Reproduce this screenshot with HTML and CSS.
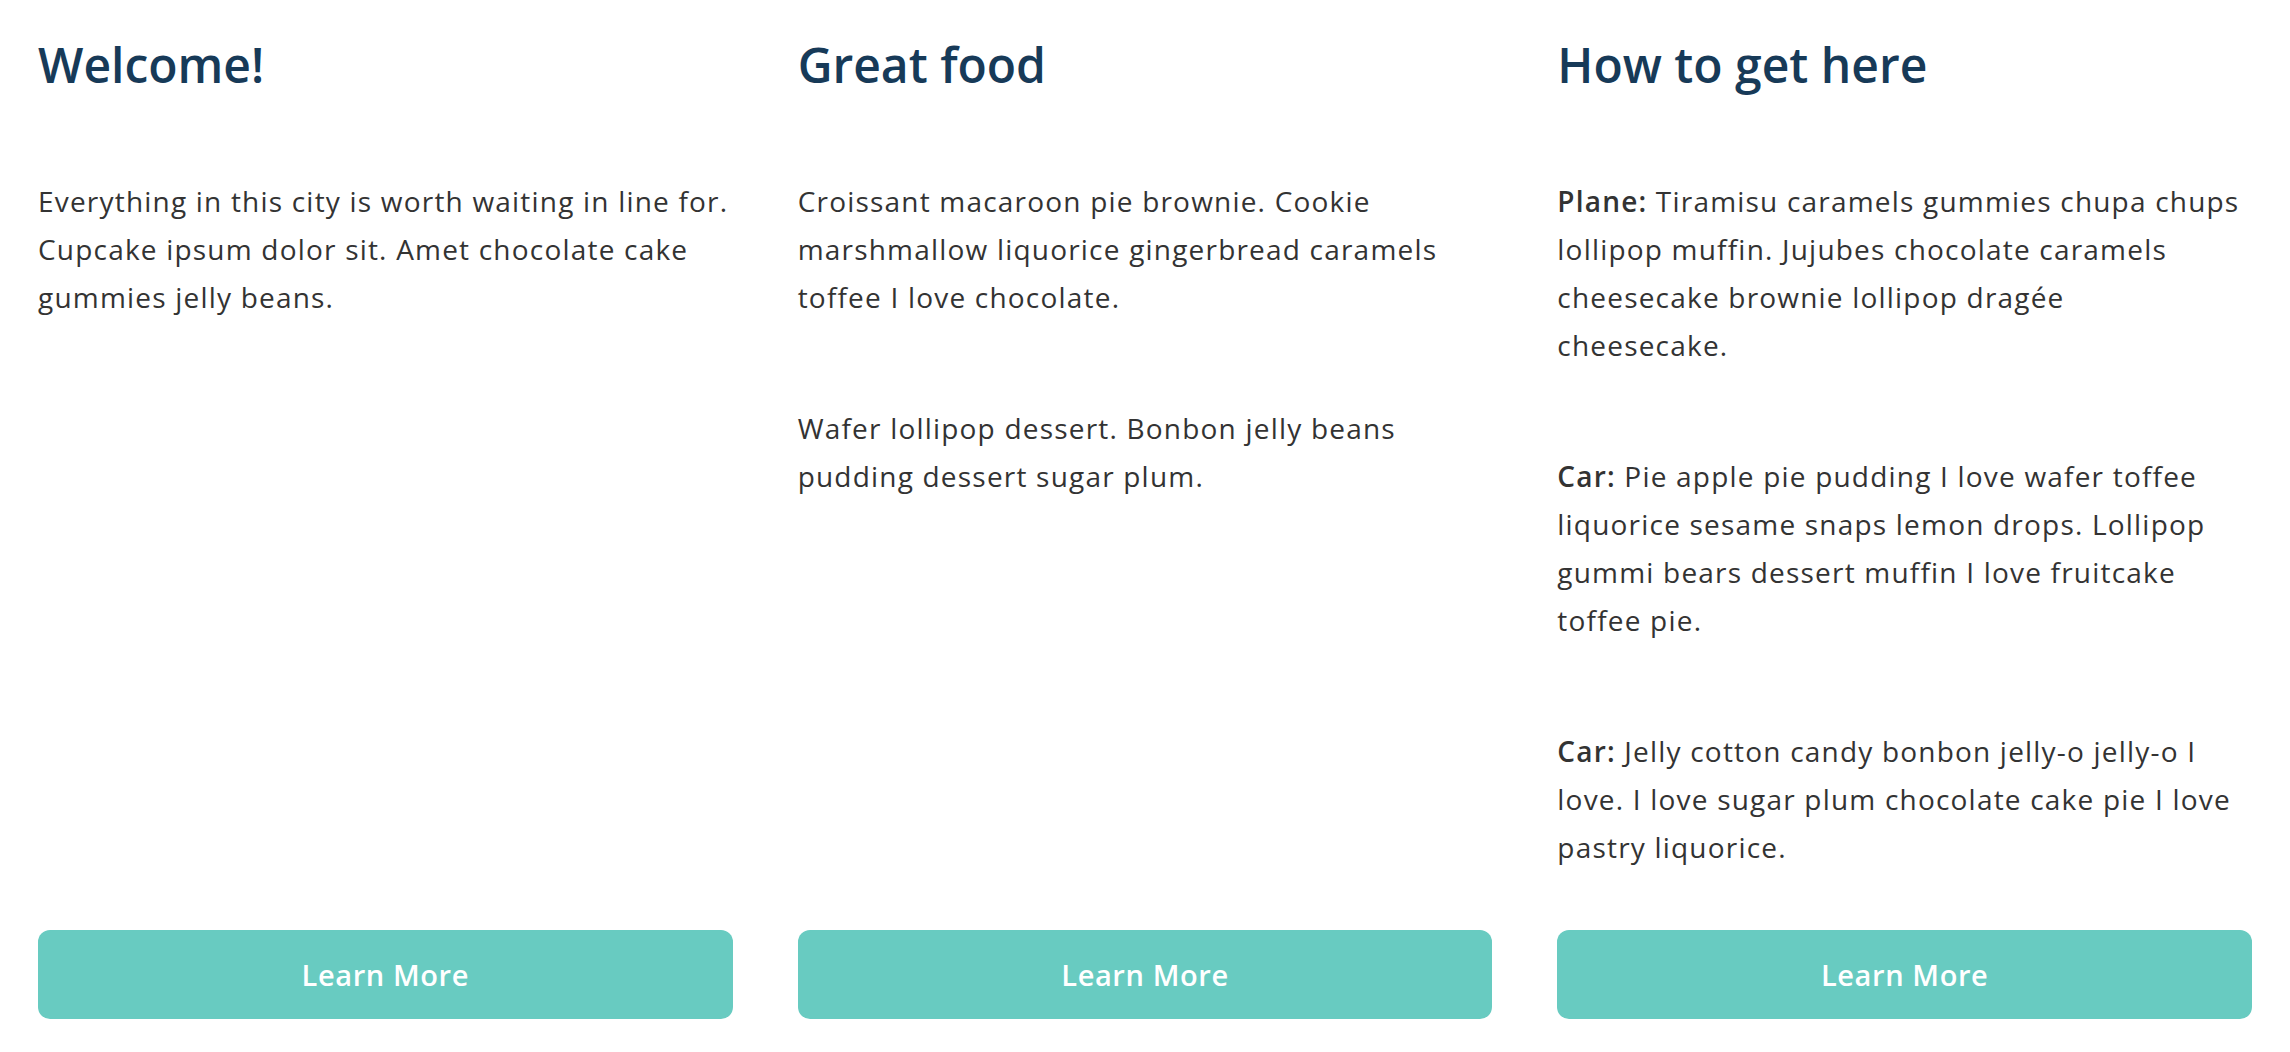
FILE: index.html
```html
<!DOCTYPE html>
<html lang="en">
<head>
<meta charset="utf-8">
<title>Features</title>
<link rel="stylesheet" href="styles.css">
</head>
<body>
<main class="columns">
  <section class="col">
    <h2 class="col-title">Welcome!</h2>
    <div class="col-text">
      <p>Everything in this city is worth waiting in line for. Cupcake ipsum dolor sit. Amet chocolate cake gummies jelly beans.</p>
    </div>
    <a class="btn" href="#">Learn More</a>
  </section>
  <section class="col">
    <h2 class="col-title">Great food</h2>
    <div class="col-text">
      <p>Croissant macaroon pie brownie. Cookie marshmallow liquorice gingerbread caramels toffee I love chocolate.</p>
      <p>Wafer lollipop dessert. Bonbon jelly beans pudding dessert sugar plum.</p>
    </div>
    <a class="btn" href="#">Learn More</a>
  </section>
  <section class="col">
    <h2 class="col-title">How to get here</h2>
    <div class="col-text">
      <p><strong>Plane:</strong> Tiramisu caramels gummies chupa chups lollipop muffin. Jujubes chocolate caramels cheesecake brownie lollipop dragée<br>cheesecake.</p>
      <p><strong>Car:</strong> Pie apple pie pudding I love wafer toffee liquorice sesame snaps lemon drops. Lollipop gummi bears dessert muffin I love fruitcake toffee pie.</p>
      <p><strong>Car:</strong> Jelly cotton candy bonbon jelly-o jelly-o I love. I love sugar plum chocolate cake pie I love pastry liquorice.</p>
    </div>
    <a class="btn" href="#">Learn More</a>
  </section>
</main>
</body>
</html>
```
FILE: styles.css
```css
html, body {
  margin: 0;
  padding: 0;
  background: #ffffff;
}

body {
  font-family: "Open Sans", "Noto Sans", sans-serif;
  color: #333333;
  padding: 36px 38px 0;
}

.columns {
  display: grid;
  grid-template-columns: repeat(3, 1fr);
  column-gap: 65px;
}

.col {
  display: flex;
  flex-direction: column;
}

.col-title {
  margin: 0 0 83px;
  font-size: 48px;
  line-height: 58px;
  font-weight: 600;
  color: #173a58;
}

.col-text {
  margin-bottom: 59px;
}

.col-text p {
  margin: 0;
  font-size: 28px;
  line-height: 48px;
  font-weight: 500;
  letter-spacing: 1.2px;
}

.col-text p + p {
  margin-top: 83px;
}

.col-text strong {
  font-weight: 600;
}

.btn {
  margin-top: auto;
  display: flex;
  align-items: center;
  justify-content: center;
  height: 89px;
  border-radius: 12px;
  background: #68cbc1;
  color: #ffffff;
  font-size: 29px;
  font-weight: 600;
  letter-spacing: 0.6px;
  text-decoration: none;
}
```
